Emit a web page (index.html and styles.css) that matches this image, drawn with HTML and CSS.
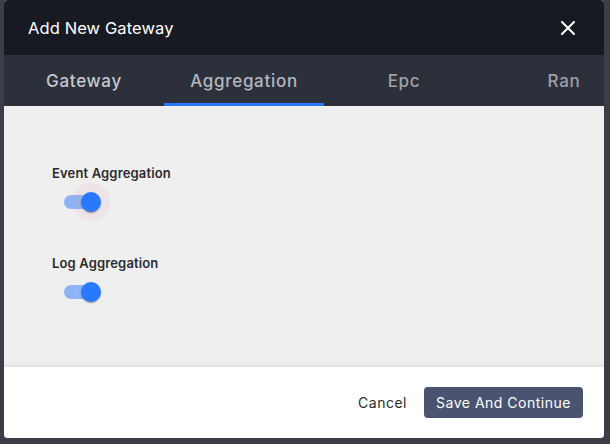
FILE: index.html
```html
<!DOCTYPE html>
<html>
<head>
<meta charset="utf-8">
<link rel="stylesheet" href="styles.css">
</head>
<body>
<div class="dialog">
  <div class="header">
    <span class="title">Add New Gateway</span>
    <svg class="close" width="14" height="14" viewBox="0 0 14 14"><path d="M1 1 L13 13 M13 1 L1 13" stroke="#fff" stroke-width="2" stroke-linecap="square"/></svg>
  </div>
  <div class="tabs">
    <div class="tab tab-visited">Gateway</div>
    <div class="tab tab-active">Aggregation</div>
    <div class="tab">Epc</div>
    <div class="tab">Ran</div>
  </div>
  <div class="content">
    <div class="field">
      <div class="label">Event Aggregation</div>
      <div class="switch">
        <span class="track"></span>
        <span class="halo"></span>
        <span class="thumb"></span>
      </div>
    </div>
    <div class="field">
      <div class="label">Log Aggregation</div>
      <div class="switch">
        <span class="track"></span>
        <span class="thumb"></span>
      </div>
    </div>
  </div>
  <div class="footer">
    <button class="btn-text">Cancel</button>
    <button class="btn-primary">Save And Continue</button>
  </div>
</div>
</body>
</html>
```

FILE: styles.css
```css
html, body {
  margin: 0;
  padding: 0;
  height: 100%;
}
body {
  background: #3b3e46;
  font-family: Inter, "Noto Sans", sans-serif;
  overflow: hidden;
}
.dialog {
  margin-left: 4px;
  width: 600px;
  height: 438px;
  border-radius: 4px;
  overflow: hidden;
  display: flex;
  flex-direction: column;
  background: #efefef;
}
.header {
  height: 55px;
  background: #171a23;
  display: flex;
  align-items: center;
  justify-content: space-between;
  padding: 0 29px 0 24px;
  flex-shrink: 0;
}
.title {
  color: #ffffff;
  font-size: 16.5px;
  font-weight: 400;
  letter-spacing: 0.1px;
}
.close {
  display: block;
}
.tabs {
  height: 51px;
  background: #2c303b;
  display: flex;
  flex-shrink: 0;
  overflow: hidden;
}
.tab {
  flex: 0 0 160px;
  box-sizing: border-box;
  display: flex;
  align-items: center;
  justify-content: center;
  font-size: 17px;
  font-weight: 500;
  letter-spacing: 0.7px;
  color: #9ea1a8;
  border-bottom: 3px solid transparent;
  padding-top: 4px;
}
.tab-visited {
  color: #c6c8ce;
}
.tab-active {
  color: #b4b7be;
  border-bottom-color: #2979ff;
}
.content {
  flex: 1;
  padding: 59px 0 0 48px;
  display: flex;
  flex-direction: column;
  gap: 34px;
}
.field {
  display: flex;
  flex-direction: column;
  gap: 2px;
}
.label {
  font-size: 13px;
  font-weight: 600;
  line-height: 16px;
  color: #2b2b2e;
  letter-spacing: 0.15px;
}
.switch {
  position: relative;
  width: 58px;
  height: 38px;
}
.track {
  position: absolute;
  left: 12px;
  top: 12px;
  width: 34px;
  height: 14px;
  border-radius: 7px;
  background: rgba(41, 121, 255, 0.5);
}
.halo {
  position: absolute;
  left: 20px;
  top: 0;
  width: 38px;
  height: 38px;
  border-radius: 50%;
  background: rgba(220, 150, 175, 0.12);
}
.thumb {
  position: absolute;
  left: 29px;
  top: 9px;
  width: 20px;
  height: 20px;
  border-radius: 50%;
  background: #2979ff;
  box-shadow: 0 2px 1px -1px rgba(0,0,0,0.2), 0 1px 1px 0 rgba(0,0,0,0.14), 0 1px 3px 0 rgba(0,0,0,0.12);
}
.footer {
  height: 71px;
  flex-shrink: 0;
  background: #ffffff;
  box-shadow: 0 -2px 5px rgba(0,0,0,0.08);
  display: flex;
  align-items: center;
  justify-content: flex-end;
  padding: 0 21px 0 0;
  gap: 9px;
  position: relative;
}
button {
  font-family: Inter, "Noto Sans", sans-serif;
  font-size: 14px;
  font-weight: 400;
  letter-spacing: 0.5px;
  border: none;
  cursor: pointer;
}
.btn-text {
  background: transparent;
  color: #2b2b2e;
  padding: 6px 8px;
}
.btn-primary {
  background: #4a5470;
  color: #ffffff;
  height: 31px;
  width: 159px;
  border-radius: 4px;
  padding: 0;
}
```
